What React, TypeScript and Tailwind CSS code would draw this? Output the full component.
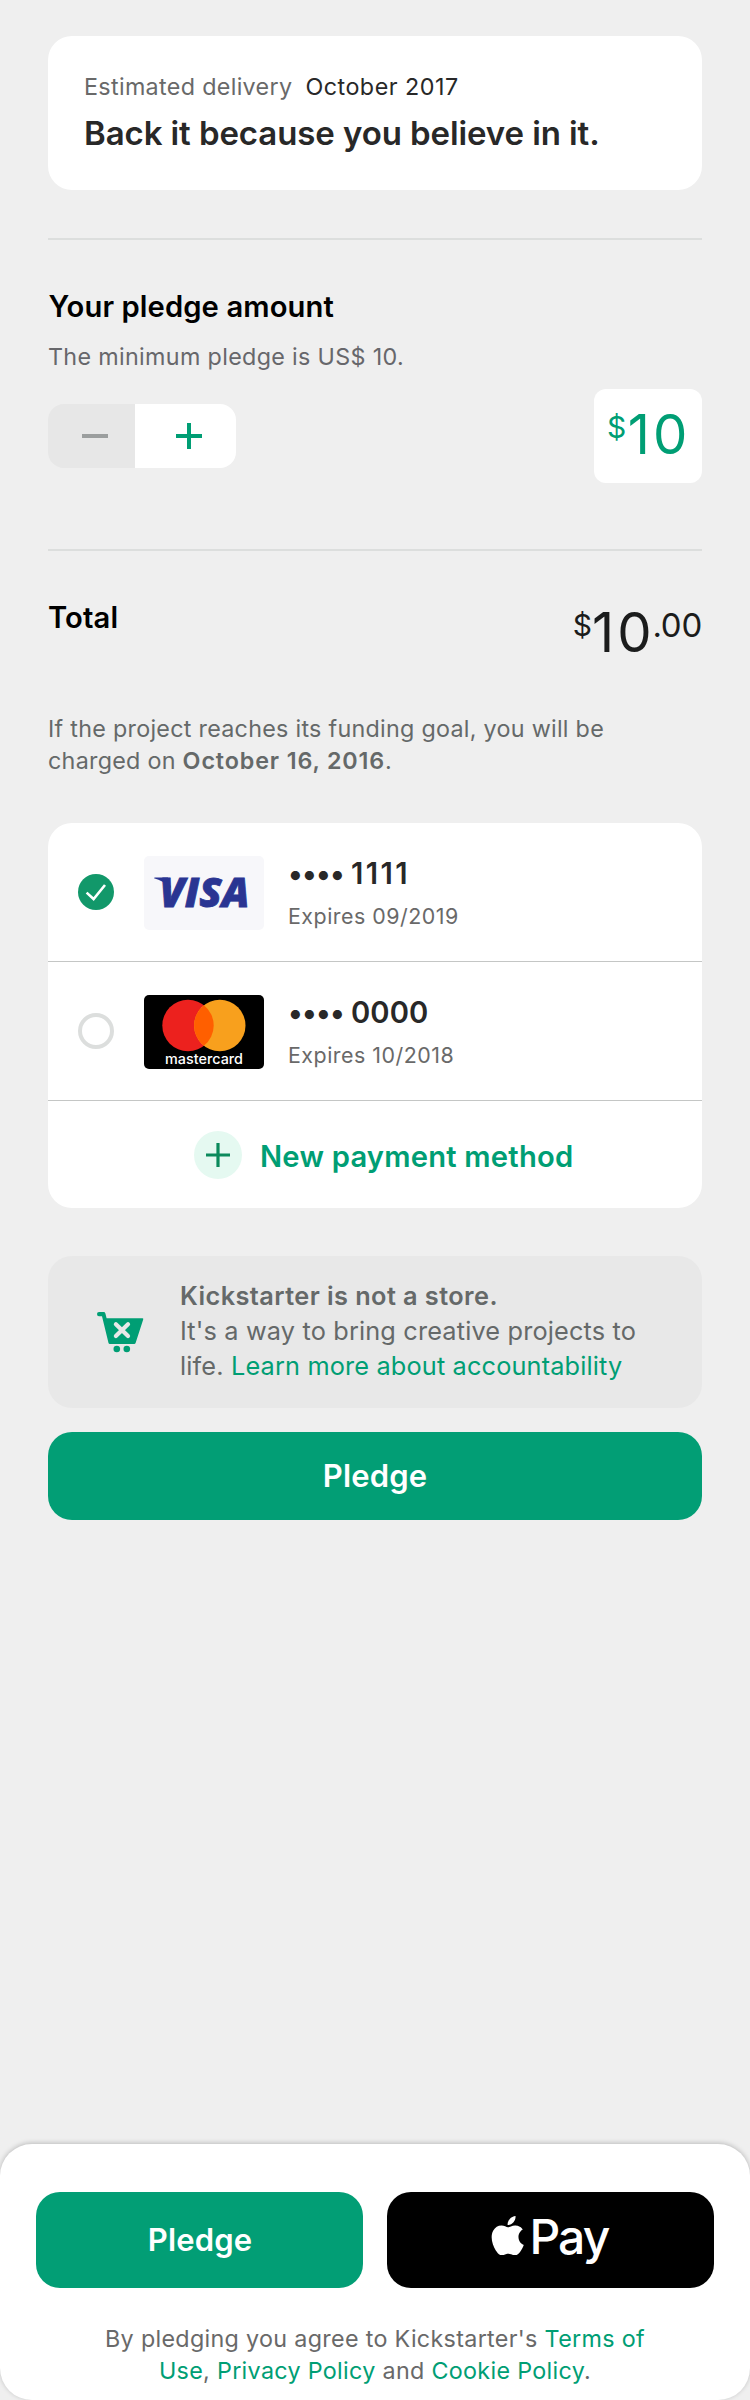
import type { ReactNode } from "react";

function Divider() {
  return <div className="h-0.5 w-full shrink-0 bg-[#dcdedd]" />;
}

function Plus({ size, thickness, className }: { size: number; thickness: number; className: string }) {
  const c = size / 2;
  return (
    <svg width={size} height={size} viewBox={`0 0 ${size} ${size}`} className={className}>
      <path d={`M0 ${c}H${size}M${c} 0V${size}`} stroke="currentColor" strokeWidth={thickness} />
    </svg>
  );
}

function VisaLogo() {
  return (
    <svg width="120" height="74" viewBox="0 0 120 74" className="rounded-[5px] bg-[#f7f7fa]">
      <path d="M10 22.2Q10 21.4 11 21.4H24L27 32Q19 24.5 10 22.2Z" fill="#2a3592" />
      <text
        x="15.5"
        y="51.4"
        textLength="90"
        lengthAdjust="spacingAndGlyphs"
        fill="#2a3592"
        stroke="#2a3592"
        strokeWidth="0.8"
        className="font-['Open_Sans',sans-serif] text-[41.5px] font-extrabold italic"
      >
        VISA
      </text>
    </svg>
  );
}

function MastercardLogo() {
  return (
    <svg width="120" height="74" viewBox="0 0 120 74" className="rounded-[5px] bg-black">
      <circle cx="44" cy="30.5" r="25.7" fill="#ec211e" />
      <circle cx="75.8" cy="30.5" r="25.7" fill="#f8a01d" />
      <path d="M59.9 10.3a25.7 25.7 0 0 1 0 40.4a25.7 25.7 0 0 1 0-40.4Z" fill="#ff5f00" />
      <text
        x="21"
        y="69.2"
        textLength="78"
        lengthAdjust="spacingAndGlyphs"
        fill="#fff"
        className="font-['Inter',sans-serif] text-[14px] font-medium"
      >
        mastercard
      </text>
    </svg>
  );
}

function Radio({ checked }: { checked: boolean }) {
  if (!checked) {
    return <span className="size-9 rounded-full border-4 border-[#dcdedd]" />;
  }
  return (
    <svg width="36" height="36" viewBox="0 0 36 36">
      <circle cx="18" cy="18" r="18" fill="#12986a" />
      <path d="M8.6 18.6L15.6 25L27 11" fill="none" stroke="#fff" strokeWidth="2.6" />
    </svg>
  );
}

function CardRow(props: { checked: boolean; logo: ReactNode; last4: ReactNode; expires: string }) {
  return (
    <div className="flex h-[138px] items-center pl-[30px]">
      <Radio checked={props.checked} />
      <div className="ml-[30px] pt-px">{props.logo}</div>
      <div className="ml-6 pt-px">
        <div className="flex h-9 items-start text-[29.2px] leading-9 font-semibold text-[#282828]">
          <span className="w-[63px] tracking-[-0.7px]">••••</span>
          {props.last4}
        </div>
        <div className="mt-[10px] text-[21.4px] leading-7 tracking-[0.5px] text-[#696969]">{props.expires}</div>
      </div>
    </div>
  );
}

function CartIcon() {
  return (
    <svg width="47" height="41" viewBox="0 0 47 41" className="text-[#009e74]">
      <path
        d="M2 0H6.6Q8 0 8.4 1.4L9.6 6.2H45.4Q46.6 6.2 46.2 7.5L38.6 31Q38.2 32 37.2 32H12.9Q11.8 32 11.5 31L5 4.3H2Q0 4.3 0 2.1Q0 0 2 0Z"
        fill="currentColor"
      />
      <circle cx="19.8" cy="37" r="3.3" fill="currentColor" />
      <circle cx="29.8" cy="37" r="3.3" fill="currentColor" />
      <path d="M18.9 12.2L31 24M31 12.2L18.9 24" stroke="#e8e8e8" strokeWidth="4.2" strokeLinecap="round" />
    </svg>
  );
}

function AppleIcon() {
  return (
    <svg width="39.4" height="39.4" viewBox="0 0 24 24" fill="#fff">
      <path d="M12.152 6.896c-.948 0-2.415-1.078-3.96-1.04-2.04.027-3.91 1.183-4.961 3.014-2.117 3.675-.546 9.103 1.519 12.09 1.013 1.454 2.208 3.09 3.792 3.039 1.52-.065 2.09-.987 3.935-.987 1.831 0 2.35.987 3.96.948 1.637-.026 2.676-1.48 3.676-2.948 1.156-1.688 1.636-3.325 1.662-3.415-.039-.013-3.182-1.221-3.22-4.857-.026-3.04 2.48-4.494 2.597-4.559-1.429-2.09-3.623-2.324-4.39-2.376-2-.156-3.675 1.09-4.61 1.09zM15.53 3.83c.843-1.012 1.4-2.427 1.245-3.83-1.207.052-2.662.805-3.532 1.818-.78.896-1.454 2.338-1.273 3.714 1.338.104 2.715-.688 3.559-1.701" />
    </svg>
  );
}

export default function App() {
  return (
    <div className="flex h-[2400px] w-[750px] flex-col bg-[#efefef] font-['Inter',sans-serif]">
      <main className="flex grow flex-col px-12 pt-9">
        <section className="h-[154px] rounded-3xl bg-white px-9 pt-[34.5px]">
          <div className="flex gap-[13px] text-[23.3px] leading-8">
            <span className="tracking-[0.33px] text-[#696969]">Estimated delivery</span>
            <span className="tracking-[0.5px] text-[#282828]">October 2017</span>
          </div>
          <h1 className="mt-[10.5px] text-[33px] leading-10 font-semibold tracking-[-0.09px] text-[#282828]">
            Back it because you believe in it.
          </h1>
        </section>

        <div className="mt-12">
          <Divider />
        </div>

        <section className="pt-[48.5px]">
          <h2 className="pl-[0.5px] text-[29.2px] leading-9 font-semibold tracking-[0.1px] text-black">Your pledge amount</h2>
          <p className="mt-4 text-[23.3px] leading-8 tracking-[0.335px] text-[#67676b]">The minimum pledge is US$ 10.</p>
          <div className="mt-[16.5px] flex h-[94px] items-center justify-between">
            <div className="flex h-16 w-[188px] overflow-hidden rounded-2xl">
              <button className="flex w-[87px] items-center justify-center bg-[#e7e7e7] pl-[7px]">
                <span className="h-1 w-[26px] bg-[#9b9e9e]" />
              </button>
              <button className="flex grow items-center justify-center bg-white pl-[7px]">
                <Plus size={26} thickness={4} className="text-[#009e74]" />
              </button>
            </div>
            <div className="flex h-[94px] w-[108px] items-start rounded-xl bg-white pl-[13px] text-[#009e74]">
              <span className="mt-5 text-[30px] leading-9">$</span>
              <span className="mt-[15px] ml-[1.5px] text-[54.5px] leading-[60px] tracking-[3px]">10</span>
            </div>
          </div>
        </section>

        <div className="mt-[66px]">
          <Divider />
        </div>

        <section className="flex h-[161.5px] items-start justify-between pt-[48.6px]">
          <h2 className="text-[29.2px] leading-9 font-semibold tracking-[0.13px] text-black">Total</h2>
          <div className="flex items-start text-[#1b1c1c]">
            <span className="mt-[7.5px] text-[30px] leading-9">$</span>
            <span className="mt-[2.4px] -mr-[2.5px] text-[54.5px] leading-[60px] tracking-[3.2px]">10</span>
            <span className="mt-[5.4px] text-[33px] leading-10 tracking-[-0.25px]">.00</span>
          </div>
        </section>

        <p className="pt-[0.5px] text-[23.3px] leading-8 tracking-[0.28px] text-[#656969]">
          If the project reaches its funding goal, you will be
          <br />
          charged on <strong className="font-semibold tracking-[0.87px]">October 16, 2016</strong>.
        </p>

        <section className="mt-[46px] h-[385px] rounded-3xl bg-white">
          <CardRow
            checked
            logo={<VisaLogo />}
            last4={<span className="tracking-[2.4px]">1111</span>}
            expires="Expires 09/2019"
          />
          <div className="h-px bg-[#c4c6c5]" />
          <CardRow
            checked={false}
            logo={<MastercardLogo />}
            last4={<span className="tracking-[0.07px]">0000</span>}
            expires="Expires 10/2018"
          />
          <div className="h-px bg-[#c4c6c5]" />
          <button className="flex h-[107px] w-full items-center pl-[146px]">
            <span className="flex size-12 items-center justify-center rounded-full bg-[#e5f9f1]">
              <Plus size={24} thickness={3.2} className="text-[#0b8a5c]" />
            </span>
            <span className="ml-[18px] pt-1 text-[29.2px] leading-9 font-semibold tracking-[0.21px] text-[#009e74]">
              New payment method
            </span>
          </button>
        </section>

        <section className="mt-12 flex h-[152px] items-start rounded-3xl bg-[#e8e8e8] pl-[49px]">
          <div className="mt-14 w-[83px]">
            <CartIcon />
          </div>
          <p className="pt-[22px] text-[25.3px] leading-[35px] whitespace-nowrap text-[#656969]">
            <strong className="font-semibold tracking-[0.43px]">Kickstarter is not a store.</strong>
            <br />
            <span className="tracking-[0.16px]">It's a way to bring creative projects to</span>
            <br />
            <span className="tracking-[0.155px]">
              life. <a className="text-[#009e74]">Learn more about accountability</a>
            </span>
          </p>
        </section>

        <button className="mt-6 h-[88px] rounded-3xl bg-[#029e75] text-[31px] font-semibold tracking-[0.16px] text-white">
          Pledge
        </button>
      </main>

      <footer className="h-64 rounded-[32px] bg-white px-9 pt-12 shadow-[0_-1px_5px_rgba(0,0,0,0.22)]">
        <div className="grid grid-cols-2 gap-6">
          <button className="h-24 rounded-3xl bg-[#029e75] pl-px text-[31px] font-semibold tracking-[0.16px] text-white">
            Pledge
          </button>
          <button className="flex h-24 items-start rounded-3xl bg-black pl-[101.3px] text-white">
            <span className="mt-[23.7px]">
              <AppleIcon />
            </span>
            <span className="mt-[14.5px] ml-[1.7px] text-[48px] leading-[60px] font-[450] tracking-[-1.9px]">Pay</span>
          </button>
        </div>
        <p className="mt-[34.5px] text-center text-[23.3px] leading-8 tracking-[0.32px] text-[#696969]">
          By pledging you agree to Kickstarter's <a className="text-[#009e74]">Terms of</a>
          <br />
          <a className="text-[#009e74]">Use</a>, <a className="text-[#009e74]">Privacy Policy</a> and{" "}
          <a className="text-[#009e74]">Cookie Policy</a>.
        </p>
      </footer>
    </div>
  );
}
